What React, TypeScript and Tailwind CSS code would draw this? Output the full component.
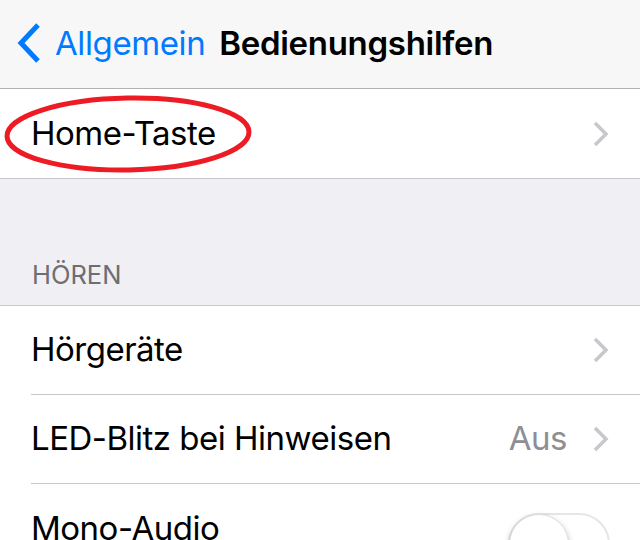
const font = { fontFamily: "Inter, 'Noto Sans', sans-serif" }

function Chevron() {
  return (
    <svg width="16" height="26" viewBox="0 0 16 26" className="shrink-0">
      <path d="M2 2 L13 13 L2 24" fill="none" stroke="#c7c7cc" strokeWidth="3.5" />
    </svg>
  )
}

function Row({
  label,
  value,
  last,
  toggle,
}: {
  label: string
  value?: string
  last?: boolean
  toggle?: boolean
}) {
  return (
    <div className="flex h-[89px] bg-white pl-[31px]">
      <div
        className={`flex flex-1 items-center pr-[31px] ${last ? "" : "border-b border-[#c8c7cc]"}`}
      >
        <span className="flex-1 text-[33px] text-black tracking-[-0.5px]">{label}</span>
        {value && (
          <span className="mr-[26px] text-[33px] text-[#8e8e93] tracking-[-0.5px]">{value}</span>
        )}
        {toggle ? (
          <div className="relative mt-[30px] mr-[-1px] h-[62px] w-[102px] rounded-full border-2 border-[#e5e5ea] bg-white">
            <div className="absolute left-[-1px] top-[-1px] h-[60px] w-[60px] rounded-full border border-[#ddd] bg-white shadow-[0_3px_6px_rgba(0,0,0,0.25)]" />
          </div>
        ) : (
          <Chevron />
        )}
      </div>
    </div>
  )
}

export default function App() {
  return (
    <div className="h-[540px] w-[640px] overflow-hidden bg-[#efeff4]" style={font}>
      <div className="flex h-[89px] items-center border-b border-[#b2b2b2] bg-[#f7f7f7] pl-[16px]">
        <svg width="26" height="42" viewBox="0 0 26 42" className="mb-[2px]">
          <path d="M22 3 L5 21 L22 39" fill="none" stroke="#007aff" strokeWidth="5" />
        </svg>
        <span className="ml-[13px] text-[33px] text-[#007aff] tracking-[-0.4px]">Allgemein</span>
        <span className="ml-[14px] text-[33px] font-semibold text-black tracking-[-0.3px]">
          Bedienungshilfen
        </span>
      </div>

      <div className="relative border-b border-[#c8c7cc]">
        <Row label="Home-Taste" last />
        <svg
          className="pointer-events-none absolute left-0 top-0"
          width="260"
          height="89"
          viewBox="0 0 260 89"
        >
          <ellipse
            cx="128"
            cy="45"
            rx="121"
            ry="36"
            fill="none"
            stroke="#ed1c24"
            strokeWidth="5"
            transform="rotate(-1 128 45)"
          />
        </svg>
      </div>

      <div className="flex h-[127px] items-end border-b border-[#c8c7cc] px-8 pb-[11px]">
        <span className="text-[25.5px] text-[#6d6d72]">HÖREN</span>
      </div>

      <Row label="Hörgeräte" />
      <Row label="LED-Blitz bei Hinweisen" value="Aus" />
      <Row label="Mono-Audio" toggle last />
    </div>
  )
}
